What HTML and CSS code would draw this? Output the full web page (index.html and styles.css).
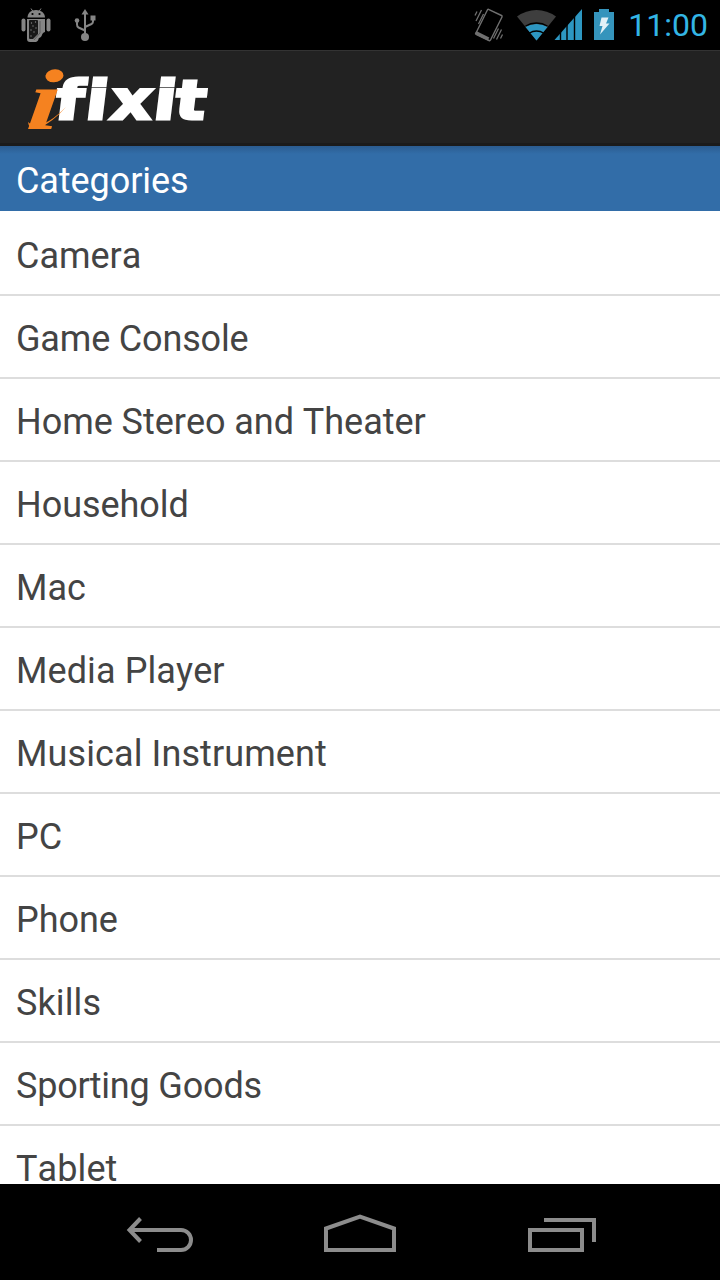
FILE: index.html
```html
<!DOCTYPE html>
<html lang="en">
<head>
<meta charset="utf-8">
<title>iFixit</title>
<link rel="stylesheet" href="styles.css">
</head>
<body>
<div class="screen">
  <header class="status">
    <svg class="notices" width="120" height="50" viewBox="0 0 120 50">
      <g fill="#858585">
        <path d="M27.500 17.500c0-4.500 3.500-7.500 8.500-7.500s9 3 9 7.500z"/>
        <path d="M31 8.500l2 3M41 8.500l-2 3" stroke="#858585" stroke-width="1"/>
        <rect x="21.500" y="18.500" width="4" height="13" rx="2"/><rect x="46.500" y="18.500" width="4" height="13" rx="2"/>
        <path d="M27 19h18v13c-4 1-2 5-6 6-1 1 0 3-3 4h-6q-3 0-3-3z"/>
      </g>
      <path d="M29 21q0-1 1-1h7q1 0 1 1v13l-5 5h-3q-1 0-1-1z" fill="#171717"/>
      <path d="M40 21v12l-6 7" fill="none" stroke="#5d5d5d"/>
      <g fill="#858585"><circle cx="31.500" cy="23" r=".7"/><circle cx="35.500" cy="22" r=".7"/><circle cx="33" cy="26" r=".7"/><circle cx="36" cy="28" r=".7"/><circle cx="31" cy="30" r=".7"/><circle cx="34" cy="32" r=".7"/><circle cx="31" cy="36" r=".7"/></g>
      <circle cx="32.500" cy="14" r="1.100"/><circle cx="39.500" cy="14" r="1.100"/>
      <g fill="none" stroke="#858585" stroke-width="2"><path d="M85 12v23M85 30.500l-6.500-3q-1.500-.8-1.500-3v-3.500M85 27l6.500-3q1.500-.8 1.500-2.500V19"/></g>
      <g fill="#858585"><path d="M85 9l3.500 5.500h-7z"/><circle cx="77" cy="20.500" r="2.300"/><rect x="90.500" y="15.500" width="5" height="5"/><circle cx="85" cy="37" r="4"/></g>
    </svg>
    <svg class="signals" width="160" height="50" viewBox="460 0 160 50">
      <g fill="none" stroke="#707070">
        <path d="M488.500 9.300l13 6.200q1 .5.500 1.500l-11.500 23q-.5 1-1.500.5l-12.500-6q-1-.5-.5-1.500l11.500-23.200q.4-.8 1-.5z" stroke-width="1.400"/>
        <path d="M475.500 32.500l13 6.500" stroke-width="3.500"/>
        <path d="M475 15.500l2-4M476 21l5.500-11M478.500 24l5-10M493.500 38.500l5-10M496.500 39.500l5-10M500.500 38.500l2-4" stroke-width="1.300"/>
      </g>
      <path d="M536.500 40.500L517 16.500Q526 10 536.500 10T556 16.500z" fill="#3e3e3e"/>
      <path d="M536.500 40.500l-11-13.500q5-3 11-3t11 3z" fill="#2d97c2"/>
      <path d="M525.500 26q5-3 11-3t11 3M529.500 33q3-2 7-2t7 2" fill="none" stroke="#000" stroke-width="1.300"/>
      <path d="M554.500 40L582 9v31z" fill="#2d97c2"/>
      <path d="M560.500 8v33M567 8v33M574.500 8v33" stroke="#000" stroke-width="1.400"/>
      <path d="M599 9h10v3h5v28h-20V12h5z" fill="#3594bc"/>
      <path d="M601.500 17.500h7l-2.500 6h3.500L600 34.500l2.500-8.500h-3z" fill="#e2f0f6"/>
    </svg>
    <time class="clock">11:00</time>
  </header>
  <div class="appbar">
    <svg class="logo" width="200" height="80" viewBox="16 58 200 80" role="img" aria-label="ifixit">
      <text class="word" transform="translate(0 117.500) skewX(-7) scale(1.18 1)" y="0" x="45.500 71.500 92.500 129 147">fixit</text>
      <text class="mark" transform="translate(25 127.500) skewX(-6) scale(1.4 1)">i</text>
      <path class="swash" d="M28 121q1 9 11 6 14-6 27-21-13 13-23 17-9 4-15-2z"/>
    </svg>
  </div>
  <h1 class="heading">Categories</h1>
  <ul class="list">
    <li>Camera</li><li class="tight">Game Console</li><li>Home Stereo and Theater</li><li>Household</li>
    <li>Mac</li><li class="loose">Media Player</li><li class="loose">Musical Instrument</li><li>PC</li>
    <li>Phone</li><li class="loose">Skills</li><li class="tight">Sporting Goods</li><li class="loose">Tablet</li>
  </ul>
  <nav class="nav">
    <svg viewBox="110 1184 100 96"><path d="M140.500 1218.500L129.500 1230l11 11.500M130 1230h51a10 10 0 0 1 0 20h-24"/></svg>
    <svg viewBox="310 1184 100 96"><path d="M326 1250v-21.500l34-12 34 12v21.500z"/></svg>
    <svg viewBox="510 1184 100 96"><path d="M530 1230h52v20h-52zM544 1220h50v22"/></svg>
  </nav>
</div>
</body>
</html>
```
FILE: styles.css
```css
* { box-sizing: border-box; }
body { margin: 0; background: #000; font-family: Roboto, sans-serif; font-kerning: none; }
.screen { width: 720px; height: 1280px; display: flex; flex-direction: column; overflow: hidden; }
.status { height: 50px; flex: none; display: flex; background: #000; }
.signals { margin-left: auto; }
.clock { width: 100px; padding: 5px 12px 0 0; text-align: right; font-size: 32px; line-height: 40px; color: #33b5e5; white-space: nowrap; }
.appbar { height: 96px; flex: none; padding: 8px 16px 0; background: #222; border-top: 1px solid #333; border-bottom: 3px solid #1b1b1b; }
.logo { display: block; overflow: visible; }
.word { font: bold 54px "DejaVu Sans", sans-serif; fill: #fff; stroke: #fff; stroke-width: 3px; }
.mark { font: italic bold 86px "Liberation Serif", serif; fill: #f58220; }
.swash { fill: #f58220; }
.heading { height: 65px; flex: none; margin: 0; padding: 14px 16px 0; font-size: 36px; line-height: 42px; font-weight: 400; letter-spacing: -.08px; color: #fff; background: linear-gradient(#2b5c90, #326da8 8px); }
.list { flex: 1; min-height: 0; overflow: hidden; margin: 0; padding: 2px 0 0; list-style: none; background: #fff; }
.list li { height: 83px; padding: 22px 16px 0; border-bottom: 2px solid #ddd; font-size: 36px; line-height: 42px; letter-spacing: -.04px; color: #444; }
.list .tight { letter-spacing: -.17px; }
.list .loose { letter-spacing: .1px; }
.nav { height: 96px; flex: none; display: flex; justify-content: center; gap: 100px; background: #000; }
.nav svg { width: 100px; height: 96px; fill: none; stroke: #8c8c8c; stroke-width: 4; }
```
